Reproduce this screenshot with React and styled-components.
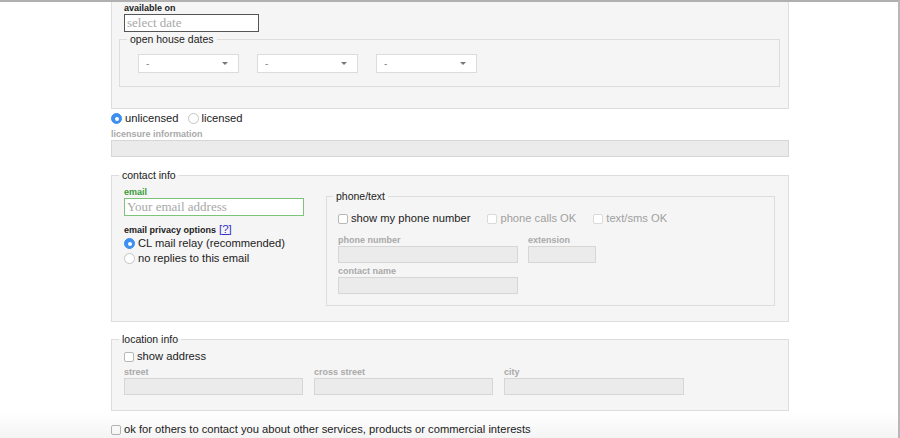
import React from 'react';
import styled, { createGlobalStyle } from 'styled-components';

const GlobalStyle = createGlobalStyle`
  html, body {
    margin: 0;
    padding: 0;
    background: #fff;
    font-family: "Liberation Sans", Arial, sans-serif;
    color: #222;
    overflow: hidden;
  }
`;

const Window = styled.div`
  position: relative;
  width: 898px;
  height: 438px;
  border-right: 2px solid #b8b8b8;
  overflow: hidden;
`;

const TopBar = styled.div`
  height: 2px;
  background: #b0b0b0;
`;

const BottomShade = styled.div`
  position: absolute;
  left: 0;
  right: 0;
  bottom: 0;
  height: 26px;
  pointer-events: none;
  background: linear-gradient(to bottom, rgba(0, 0, 0, 0), rgba(0, 0, 0, 0.045));
`;

const Page = styled.div`
  width: 678px;
  margin-left: 111px;
  display: flex;
  flex-direction: column;
`;

const TopBox = styled.div`
  background: #f5f5f5;
  border: 1px solid #ddd;
  border-top: none;
  padding: 0 8px 21px 7px;
`;

const Label = styled.div`
  font-size: 9px;
  font-weight: bold;
  line-height: 11px;
  height: 11px;
  color: ${(p) => p.color || '#222'};
  margin-left: ${(p) => p.indent || 0}px;
`;

const TextInput = styled.div`
  box-sizing: border-box;
  width: ${(p) => p.w}px;
  height: ${(p) => p.h || 17}px;
  border: 1px solid ${(p) => p.border || '#d6d6d6'};
  background: ${(p) => p.bg || '#ebebeb'};
  font-family: "Liberation Serif", "Times New Roman", serif;
  font-size: 13px;
  line-height: ${(p) => (p.h || 17) - 2}px;
  color: #a8a8a8;
  padding-left: 2px;
  margin-left: ${(p) => p.indent || 0}px;
`;

const Fieldset = styled.fieldset`
  margin: 0;
  border: 1px solid #ddd;
  background: ${(p) => p.bg || 'transparent'};
  padding: ${(p) => p.pad};
  min-width: 0;
`;

const Legend = styled.legend`
  font-size: 10.5px;
  padding: 0 3px;
  margin-left: ${(p) => p.offset || 0}px;
  color: #222;
`;

const SelectRow = styled.div`
  display: flex;
  gap: 18px;
`;

const Select = styled.div`
  box-sizing: border-box;
  width: 101px;
  height: 19px;
  background: #fff;
  border: 1px solid #dcdcdc;
  display: flex;
  align-items: center;
  justify-content: space-between;
  padding: 0 10px 0 7px;
  font-size: 10px;
  color: #888;
`;

const Caret = styled.span`
  width: 0;
  height: 0;
  border-left: 3px solid transparent;
  border-right: 3px solid transparent;
  border-top: 3px solid #777;
`;

const OptionRow = styled.div`
  display: flex;
  align-items: center;
  gap: ${(p) => p.gap || 10}px;
  height: ${(p) => p.h || 15}px;
  flex-shrink: 0;
  margin-left: ${(p) => p.indent || 0}px;
`;

const Option = styled.label`
  display: flex;
  align-items: center;
  gap: 3px;
  font-size: 11.2px;
  line-height: 13px;
  color: ${(p) => (p.disabled ? '#a0a0a0' : '#222')};
  white-space: nowrap;
`;

const RadioDot = styled.span`
  box-sizing: border-box;
  width: 11px;
  height: 11px;
  border-radius: 50%;
  display: inline-flex;
  align-items: center;
  justify-content: center;
  background: ${(p) => (p.checked ? '#3d8ff2' : '#fff')};
  border: 1px solid ${(p) => (p.checked ? '#3d8ff2' : '#c4c4c4')};
  &::after {
    content: '';
    width: 4px;
    height: 4px;
    border-radius: 50%;
    background: ${(p) => (p.checked ? '#fff' : 'transparent')};
  }
`;

const CheckBox = styled.span`
  box-sizing: border-box;
  width: 10px;
  height: 10px;
  border-radius: 2px;
  background: #fff;
  border: 1px solid ${(p) => (p.faint ? '#dadada' : '#b8b8b8')};
`;

const Help = styled.a`
  font-size: 11.5px;
  line-height: 11px;
  font-weight: normal;
  color: #3333cc;
  text-decoration: underline;
  margin-left: 3px;
`;

const ContactGrid = styled.div`
  display: flex;
  justify-content: space-between;
  align-items: flex-start;
`;

const Column = styled.div`
  display: flex;
  flex-direction: column;
`;

const FieldRow = styled.div`
  display: flex;
  gap: ${(p) => p.gap || 10}px;
`;

const Field = styled.div`
  display: flex;
  flex-direction: column;
  margin-top: ${(p) => p.top || 0}px;
`;

const Radio = ({ checked, children }) => (
  <Option>
    <RadioDot checked={checked} />
    {children}
  </Option>
);

const Check = ({ disabled, children }) => (
  <Option disabled={disabled}>
    <CheckBox faint={disabled} />
    {children}
  </Option>
);

export default function App() {
  return (
    <>
      <GlobalStyle />
      <Window>
        <TopBar />
        <Page>
          <TopBox>
            <Label indent={5} style={{ marginTop: 1 }}>available on</Label>
            <TextInput w={135} h={18} border="#555" bg="#fff" indent={5}>
              select date
            </TextInput>
            <Fieldset pad="9px 18px 13px 18px" style={{ marginTop: 1 }}>
              <Legend offset={-11}>open house dates</Legend>
              <SelectRow>
                <Select>-<Caret /></Select>
                <Select>-<Caret /></Select>
                <Select>-<Caret /></Select>
              </SelectRow>
            </Fieldset>
          </TopBox>

          <OptionRow gap={9} h={15} style={{ marginTop: 2 }}>
            <Radio checked>unlicensed</Radio>
            <Radio>licensed</Radio>
          </OptionRow>
          <Field top={3}>
            <Label color="#a9a9a9">licensure information</Label>
            <TextInput w={678} />
          </Field>

          <Fieldset bg="#f5f5f5" pad="6px 13px 15px 12px" style={{ marginTop: 12 }}>
            <Legend offset={-5}>contact info</Legend>
            <ContactGrid>
              <Column>
                <Label color="#3b9a3b">email</Label>
                <TextInput w={180} h={18} border="#7cc47c" bg="#fff">
                  Your email address
                </TextInput>
                <Label style={{ marginTop: 8 }}>
                  email privacy options<Help>[?]</Help>
                </Label>
                <OptionRow h={15} style={{ marginTop: 1 }}>
                  <Radio checked>CL mail relay (recommended)</Radio>
                </OptionRow>
                <OptionRow h={15}>
                  <Radio>no replies to this email</Radio>
                </OptionRow>
              </Column>
              <Fieldset pad="9px 11px 11px 11px" style={{ width: 449, boxSizing: 'border-box', marginTop: 3 }}>
                <Legend offset={-5}>phone/text</Legend>
                <OptionRow gap={17} h={15}>
                  <Check>show my phone number</Check>
                  <Check disabled>phone calls OK</Check>
                  <Check disabled>text/sms OK</Check>
                </OptionRow>
                <FieldRow gap={10}>
                  <Field top={9}>
                    <Label color="#a9a9a9">phone number</Label>
                    <TextInput w={180} />
                  </Field>
                  <Field top={9}>
                    <Label color="#a9a9a9">extension</Label>
                    <TextInput w={68} />
                  </Field>
                </FieldRow>
                <Field top={3}>
                  <Label color="#a9a9a9">contact name</Label>
                  <TextInput w={180} />
                </Field>
              </Fieldset>
            </ContactGrid>
          </Fieldset>

          <Fieldset bg="#f5f5f5" pad="4px 12px 15px 12px" style={{ marginTop: 11 }}>
            <Legend offset={-5}>location info</Legend>
            <OptionRow h={15}>
              <Check>show address</Check>
            </OptionRow>
            <FieldRow gap={11}>
              <Field top={3}>
                <Label color="#a9a9a9">street</Label>
                <TextInput w={179} />
              </Field>
              <Field top={3}>
                <Label color="#a9a9a9">cross street</Label>
                <TextInput w={179} />
              </Field>
              <Field top={3}>
                <Label color="#a9a9a9">city</Label>
                <TextInput w={180} />
              </Field>
            </FieldRow>
          </Fieldset>

          <OptionRow h={15} style={{ marginTop: 11 }}>
            <Check>ok for others to contact you about other services, products or commercial interests</Check>
          </OptionRow>
        </Page>
        <BottomShade />
      </Window>
    </>
  );
}
